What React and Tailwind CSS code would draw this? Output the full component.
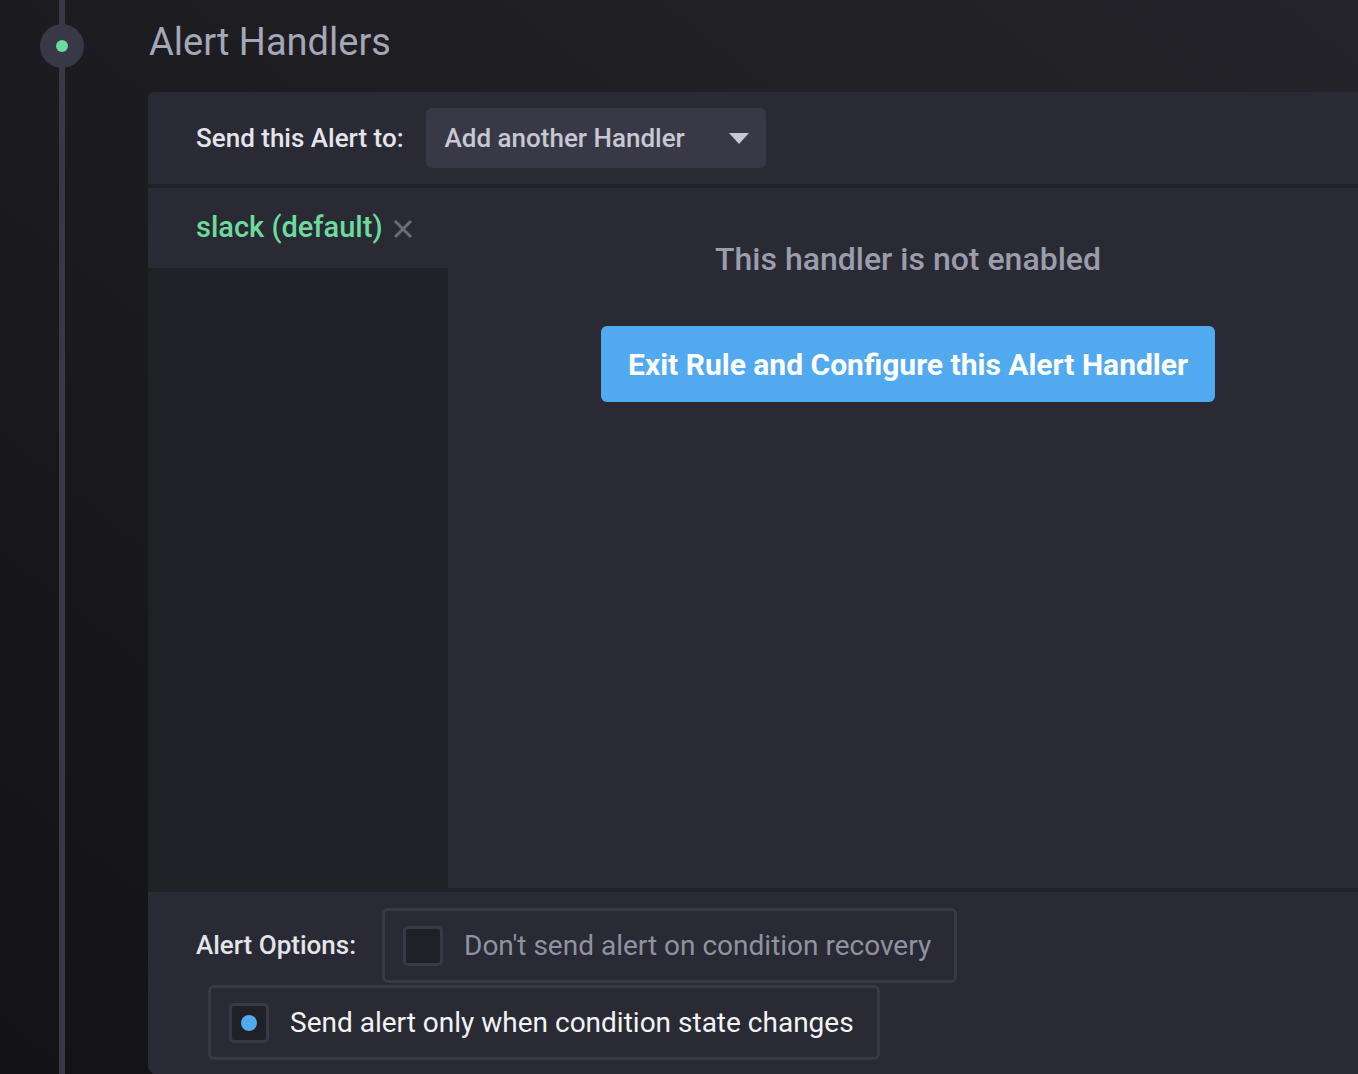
import React from 'react';

function OptionBox({ checked, label, className = '' }) {
  return (
    <div
      className={`h-[75px] border-[3px] border-[#383846] rounded-[6px] pl-[18px] pr-[23px] flex items-center gap-[21px] ${className}`}
    >
      <div className="w-[40px] h-[40px] rounded-[5px] border-[3px] border-[#383846] bg-[#202127] flex items-center justify-center shrink-0">
        {checked && <div className="w-[16px] h-[16px] rounded-full bg-[#51aaf0]"></div>}
      </div>
      <span
        className={`text-[28px] leading-none whitespace-nowrap ${
          checked ? 'text-[#f3f3f7]' : 'text-[#8f92a1]'
        }`}
      >
        {label}
      </span>
    </div>
  );
}

export default function App() {
  return (
    <div className="h-[1074px] w-full overflow-hidden flex bg-gradient-to-tr from-[#131317] to-[#24242a] font-['Roboto',sans-serif]">
      {/* timeline rail */}
      <div className="relative w-[148px] shrink-0">
        <div className="absolute left-[59px] top-0 bottom-0 w-[6px] bg-[#383846]"></div>
        <div className="relative ml-[40px] mt-[24px] w-[44px] h-[44px] rounded-full bg-[#383846] flex items-center justify-center">
          <div className="w-[12px] h-[12px] rounded-full bg-[#6ddb9d]"></div>
        </div>
      </div>

      <div className="flex-1 flex flex-col min-w-0">
        <h2 className="pt-[20px] pl-[1px] h-[92px] text-[38px] leading-[44px] font-normal text-[#a4a7b5] whitespace-nowrap">
          Alert Handlers
        </h2>

        <div className="flex-1 flex flex-col bg-[#292a33] rounded-tl-[6px] rounded-bl-[8px] overflow-hidden">
          {/* header */}
          <div className="h-[92px] flex items-center pl-[48px] gap-[22px] shrink-0">
            <span className="text-[26px] font-medium text-[#e4e5ea] whitespace-nowrap">Send this Alert to:</span>
            <div className="w-[340px] h-[60px] rounded-[6px] bg-[#383846] flex items-center justify-between pl-[19px] pr-[17px]">
              <span className="text-[26px] font-medium text-[#c7c8d2] whitespace-nowrap">Add another Handler</span>
              <svg width="20" height="11" viewBox="0 0 20 11">
                <path d="M0 0 H20 L10 11 Z" fill="#c7c8d2" />
              </svg>
            </div>
          </div>

          <div className="h-[4px] bg-[#202127] shrink-0"></div>

          {/* body */}
          <div className="h-[700px] flex shrink-0">
            <div className="w-[300px] bg-[#202127] shrink-0">
              <div className="h-[80px] bg-[#292a33] flex items-center pl-[48px] gap-[10px]">
                <span className="text-[29px] font-medium text-[#6ddb9d] whitespace-nowrap">slack (default)</span>
                <svg width="20" height="20" viewBox="0 0 20 20" className="mt-[1px]">
                  <path d="M2 2 L18 18 M18 2 L2 18" stroke="#6b6c7a" strokeWidth="3" />
                </svg>
              </div>
            </div>
            <div className="flex-1 flex flex-col items-center pl-[10px]">
              <p className="mt-[52px] text-[32px] font-medium text-[#9b9dab] leading-[38px] whitespace-nowrap">
                This handler is not enabled
              </p>
              <button className="mt-[48px] h-[76px] px-[27px] rounded-[6px] bg-[#51aaf0] text-white text-[30px] font-bold whitespace-nowrap">
                Exit Rule and Configure this Alert Handler
              </button>
            </div>
          </div>

          <div className="h-[4px] bg-[#202127] shrink-0"></div>

          {/* footer */}
          <div className="flex-1 flex flex-col pt-[16px] gap-[2px]">
            <div className="flex items-center pl-[48px] gap-[26px]">
              <span className="text-[26px] font-medium text-[#e4e5ea] whitespace-nowrap">Alert Options:</span>
              <OptionBox label="Don't send alert on condition recovery" />
            </div>
            <div className="flex pl-[60px]">
              <OptionBox checked label="Send alert only when condition state changes" className="h-[73px]" />
            </div>
          </div>
        </div>
      </div>
    </div>
  );
}
